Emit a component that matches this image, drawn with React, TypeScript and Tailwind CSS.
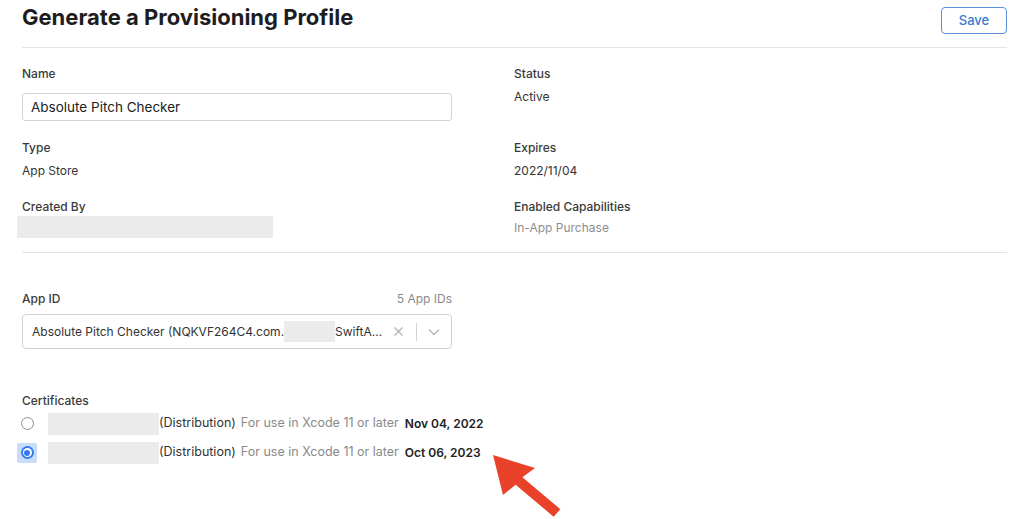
import React from "react";

function Radio(props: { checked?: boolean }) {
  if (props.checked) {
    return (
      <div className="-ml-[5px] flex h-[20px] w-[20px] items-center justify-center rounded-[2px] bg-[#c6dcf7]">
        <div className="flex h-[13px] w-[13px] items-center justify-center rounded-full bg-[#3478f6]">
          <div className="flex h-[9px] w-[9px] items-center justify-center rounded-full bg-white">
            <div className="h-[6px] w-[6px] rounded-full bg-[#3478f6]" />
          </div>
        </div>
      </div>
    );
  }
  return <div className="-ml-[1px] h-[13px] w-[13px] rounded-full border border-[#8d8d8d] bg-white" />;
}

function CertRow(props: { date: string; checked?: boolean }) {
  return (
    <div className="flex h-[29px] items-center whitespace-nowrap text-[12.5px]">
      <div className="flex w-[26px] items-center">
        <Radio checked={props.checked} />
      </div>
      <div className="h-[22px] w-[111px] bg-[#ebebeb]" />
      <span className="text-[#333]">(Distribution)</span>
      <span className="ml-[5px] text-[#8a8a8a]">For use in Xcode 11 or later</span>
      <span className="ml-[6px] text-[12px] font-semibold text-[#222]">{props.date}</span>
    </div>
  );
}

export default function App() {
  return (
    <div className="relative min-h-[519px] w-full bg-white pl-[22px] pr-[17px] font-['Inter',sans-serif] text-[#333]">
      {/* header */}
      <div className="flex h-[48px] items-start justify-between border-b border-[#e4e4e4]">
        <h1 className="mt-[3px] text-[22px] font-bold leading-[28px] text-[#1d1d1f]">
          Generate a Provisioning Profile
        </h1>
        <button className="mt-[7px] h-[27px] w-[66px] rounded-[4px] border border-[#5b91dc] text-[13px] font-medium text-[#3a7bd5]">
          Save
        </button>
      </div>

      {/* details */}
      <div className="border-b border-[#e4e4e4] pb-[14px] pt-[18px]">
        <div className="grid grid-cols-[430px_1fr] gap-x-[62px]">
          <div>
            <div className="text-[12px] font-medium leading-4 text-[#3a3a3a]">Name</div>
            <div className="mt-[11px] flex h-[28px] items-center rounded-[3px] border border-[#d4d4d4] px-[8px] text-[13.5px] text-[#222]">
              Absolute Pitch Checker
            </div>
          </div>
          <div>
            <div className="text-[12px] font-medium leading-4 text-[#3a3a3a]">Status</div>
            <div className="mt-[7px] text-[12px] leading-4">Active</div>
          </div>

          <div className="mt-[19px]">
            <div className="text-[12px] font-medium leading-4 text-[#3a3a3a]">Type</div>
            <div className="mt-[7px] text-[12px] leading-4">App Store</div>
          </div>
          <div className="mt-[19px]">
            <div className="text-[12px] font-medium leading-4 text-[#3a3a3a]">Expires</div>
            <div className="mt-[7px] text-[12px] leading-4">2022/11/04</div>
          </div>

          <div className="mt-[20px]">
            <div className="text-[12px] font-medium leading-4 text-[#3a3a3a]">Created By</div>
            <div className="-ml-[5px] mt-[1px] h-[22px] w-[256px] bg-[#ebebeb]" />
          </div>
          <div className="mt-[20px]">
            <div className="text-[12px] font-medium leading-4 text-[#3a3a3a]">Enabled Capabilities</div>
            <div className="mt-[5px] text-[12px] leading-4 text-[#8e8e8e]">In-App Purchase</div>
          </div>
        </div>
      </div>

      {/* app id */}
      <div className="w-[430px] pt-[38px]">
        <div className="flex items-center justify-between leading-4">
          <span className="text-[12px] font-medium text-[#3a3a3a]">App ID</span>
          <span className="text-[12px] text-[#8a8a8a]">5 App IDs</span>
        </div>
        <div className="mt-[7px] flex h-[35px] items-center whitespace-nowrap rounded-[4px] border border-[#d2d2d2] pl-[9px] text-[12px] text-[#333]">
          <span className="shrink-0">Absolute Pitch Checker (NQKVF264C4.com.</span>
          <div className="h-[21px] w-[51px] shrink-0 bg-[#ebebeb]" />
          <span className="shrink-0">SwiftA...</span>
          <div className="ml-auto flex h-full shrink-0 items-center">
            <div className="flex w-[20px] items-center justify-center text-[#b5b5b5]">
              <svg width="11" height="11" viewBox="0 0 11 11" fill="none" stroke="currentColor" strokeWidth="1.4">
                <path d="M1.5 1.5l8 8M9.5 1.5l-8 8" />
              </svg>
            </div>
            <div className="ml-[8px] h-[18px] w-px bg-[#d2d2d2]" />
            <div className="flex w-[34px] items-center justify-center text-[#b5b5b5]">
              <svg width="12" height="8" viewBox="0 0 12 8" fill="none" stroke="currentColor" strokeWidth="1.3">
                <path d="M1 1.5l5 5 5-5" />
              </svg>
            </div>
          </div>
        </div>
      </div>

      {/* certificates */}
      <div className="mt-[45px]">
        <div className="text-[12px] font-medium leading-[14px] text-[#3a3a3a]">Certificates</div>
        <div className="mt-[1px]">
          <CertRow date="Nov 04, 2022" />
          <CertRow date="Oct 06, 2023" checked />
        </div>
      </div>

      {/* annotation arrow */}
      <svg
        className="pointer-events-none absolute left-[480px] top-[445px]"
        width="90"
        height="74"
        viewBox="480 445 90 74"
      >
        <polygon
          points="493,455 535,468 522.4,477.3 560.4,509.3 553.6,516.7 515.6,484.7 503,495"
          fill="#e8432a"
        />
      </svg>
    </div>
  );
}
